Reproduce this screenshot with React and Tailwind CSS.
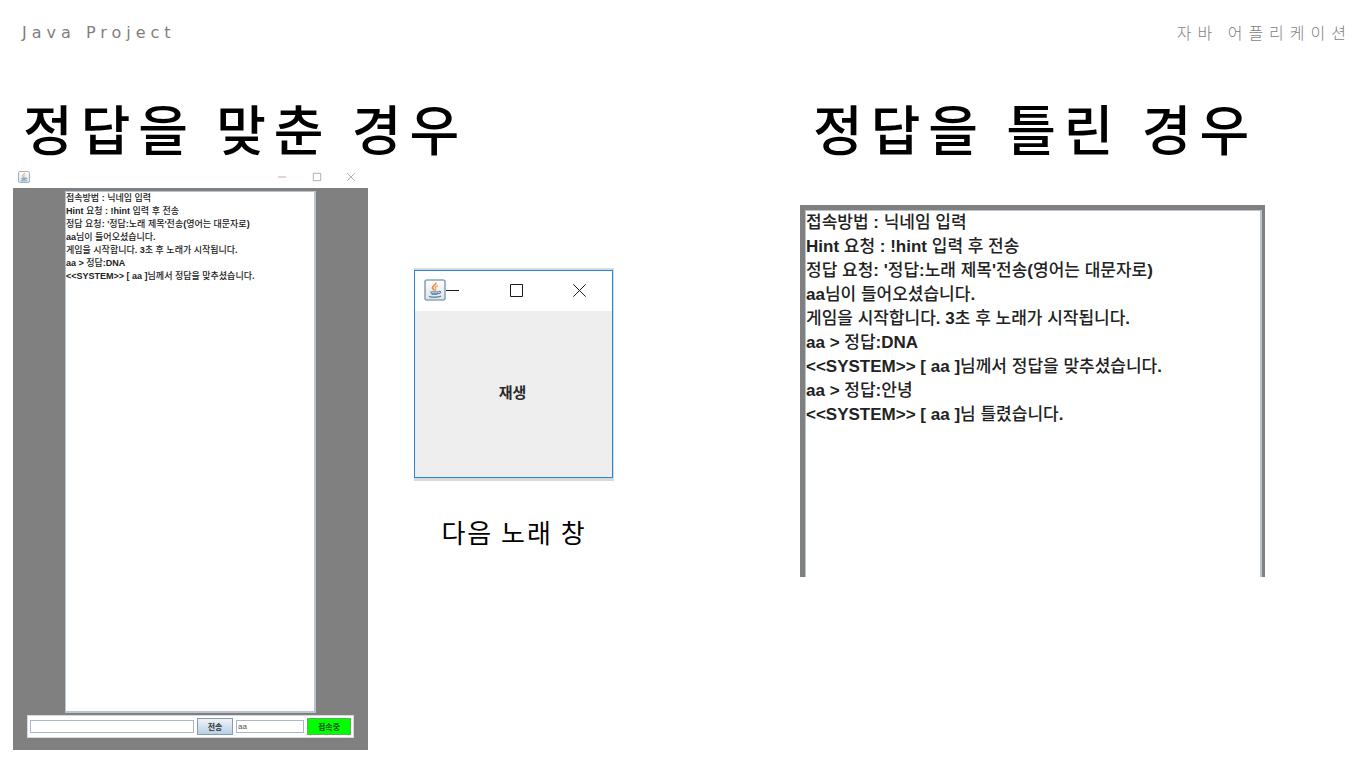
import React from "react";

const SANS = "font-['Liberation_Sans','Noto_Sans_CJK_KR',sans-serif]";
const KOREAN = "font-['Noto_Sans_CJK_KR',sans-serif]";

const GUIDE = [
  "접속방법 : 닉네임 입력",
  "Hint 요청 : !hint 입력 후 전송",
  "정답 요청: '정답:노래 제목'전송(영어는 대문자로)",
  "aa님이 들어오셨습니다.",
  "게임을 시작합니다. 3초 후 노래가 시작됩니다.",
  "aa > 정답:DNA",
  "<<SYSTEM>> [ aa ]님께서 정답을 맞추셨습니다.",
];
const WRONG = [...GUIDE, "aa > 정답:안녕", "<<SYSTEM>> [ aa ]님 틀렸습니다."];

// Latin runs are bold, Hangul keeps the medium weight.
function LogLine({ text }) {
  return (
    <p className="font-medium whitespace-nowrap">
      {text.split(/([!-~]+)/).map((part, i) =>
        i % 2 ? <b key={i}>{part}</b> : part
      )}
    </p>
  );
}

function JavaIcon({ className }) {
  return (
    <svg viewBox="0 0 22 22" className={className} aria-hidden="true">
      <defs>
        <linearGradient id="tile" x1="0" y1="0" x2="0" y2="1">
          <stop offset="0" stopColor="#ffffff" />
          <stop offset="1" stopColor="#dde3e8" />
        </linearGradient>
      </defs>
      <rect x="1" y="1" width="20" height="20" rx="2" fill="url(#tile)" stroke="#8ba6ba" strokeWidth="1.6" />
      <path d="M11.8 3.6c.8 2-3.6 3.200-3.300 5.200.2 1.200 1.700 1.800 1.700 3" fill="none" stroke="#ee8a3c" strokeWidth="1.700" />
      <path d="M13.800 6.600c-1.800.8-2.900 1.600-2.500 2.700.4 1 .9 1.500-.1 2.600" fill="none" stroke="#f0a25f" strokeWidth="1.300" />
      <path d="M6.200 12.200h8.600c-.3 2.300-1.200 3.600-2.200 3.900H8.400c-1-.3-1.900-1.600-2.200-3.900z" fill="#6f93b3" />
      <path d="M14.600 12.500c2.900-.8 3 1.900-.8 2.300" fill="none" stroke="#5f86a8" strokeWidth="1.100" />
      <path d="M7.500 13.500h6" stroke="#c4d4e1" strokeWidth=".7" />
      <path d="M5 17.300c2.500 1.300 9 1.300 12-.1" fill="none" stroke="#5f86a8" strokeWidth="1.300" />
    </svg>
  );
}

const SHAPES = {
  최소화: "M0 6.500h13",
  최대화: "M.5.5h12v12h-12z",
  닫기: "M.3.3l12.400 12.400M12.700.3L.3 12.700",
};

function WindowButtons({ size, stroke }) {
  return (
    <div className="flex flex-1 items-center justify-between">
      {Object.entries(SHAPES).map(([label, d]) => (
        <button key={label} type="button" aria-label={label} className={"block " + stroke}>
          <svg viewBox="0 0 13 13" className={"block overflow-visible " + size} fill="none" stroke="currentColor">
            <path d={d} vectorEffect="non-scaling-stroke" />
          </svg>
        </button>
      ))}
    </div>
  );
}

function Title({ children }) {
  return (
    <h2 className={"whitespace-nowrap text-[54px] leading-[72px] font-medium tracking-[8px] " + KOREAN}>
      {children}
    </h2>
  );
}

function ChatWindow() {
  return (
    <div className="flex w-[355px] flex-col">
      <div className="flex h-5 items-center pr-[13px] pb-[2px] pl-[5px]">
        <JavaIcon className="size-3" />
        <div className="flex flex-1 justify-end">
          <div className="flex w-[77px]">
            <WindowButtons size="size-2" stroke="text-[#b0b0b0]" />
          </div>
        </div>
      </div>
      <div className="flex flex-1 flex-col gap-[2px] bg-[#808080] px-[14px] pt-[3px] pb-3">
        <div className={"mx-[38px] flex-1 border border-r-2 border-b-2 border-[#b8c4d0] bg-white text-[9px] leading-[13px] text-[#222] " + SANS}>
          {GUIDE.map((t) => (
            <LogLine key={t} text={t} />
          ))}
        </div>
        <form className="flex h-[23px] items-center gap-[3px] border border-[#d8d8d8] bg-white px-[2px]">
          <input aria-label="메시지" className={"h-[13px] min-w-0 flex-1 border border-[#a9b7c6] px-px text-[8px] " + SANS} />
          <button type="button" className={"h-[17px] w-9 border border-[#8a9bb0] bg-linear-to-b from-[#eef3f8] to-[#b8cfe5] text-[8px] leading-none font-bold text-[#333] " + KOREAN}>
            전송
          </button>
          <input aria-label="닉네임" defaultValue="aa" className={"h-[13px] w-[68px] border border-[#a9b7c6] px-px text-[8px] text-[#555] " + SANS} />
          <button type="button" className={"h-[17px] w-11 border border-[#5fae5f] bg-[#00ff00] text-[8px] leading-none font-bold text-[#145014] " + KOREAN}>
            접속중
          </button>
        </form>
      </div>
    </div>
  );
}

function SongWindow() {
  return (
    <figure className="mt-[100px] flex w-[200px] flex-col">
      <div className="bg-[#d9d9d9] pt-[2px] pr-px pb-[3px]">
        <div className="border border-[#2488d8] bg-white">
          <div className="flex h-10 items-center pr-[26px] pb-[2px] pl-[9px]">
            <JavaIcon className="size-[22px]" />
            <WindowButtons size="size-[13px]" stroke="text-[#1a1a1a]" />
          </div>
          <button type="button" className={"block h-[166px] w-full bg-[#eeeeee] pr-[2px] pb-1 text-[15px] font-bold text-[#2a2a2a] " + KOREAN}>
            재생
          </button>
        </div>
      </div>
      <figcaption className={"mt-8 text-center text-[26px] leading-[38px] tracking-[2px] whitespace-nowrap " + KOREAN}>
        다음 노래 창
      </figcaption>
    </figure>
  );
}

export default function App() {
  return (
    <div className={"flex min-h-screen flex-col overflow-x-hidden bg-white text-black " + SANS}>
      <header className="flex h-[66px] items-center justify-between pr-4 pl-[22px] text-[16px] text-[#7f7f7f]">
        <span className="font-['DejaVu_Sans',sans-serif] tracking-[5px]">Java Project</span>
        <span className={"pb-[2px] font-light tracking-[6px] " + KOREAN}>자바 어플리케이션</span>
      </header>
      <main className="grid flex-1 grid-cols-[787fr_568fr] pt-[26px] pb-3 pl-[13px]">
        <section className="flex flex-col gap-1">
          <div className="pl-[10px]">
            <Title>정답을 맞춘 경우</Title>
          </div>
          <div className="flex flex-1 gap-[46px]">
            <ChatWindow />
            <SongWindow />
          </div>
        </section>
        <section>
          <div className="pl-[13px]">
            <Title>정답을 틀린 경우</Title>
          </div>
          <div className="mt-[41px] w-full max-w-[465px] bg-[#808080] pt-[5px] pr-[3px] pl-[5px]">
            <div className={"min-h-[367px] border-t border-r-2 border-l border-[#b8c4d0] bg-white text-[17px] leading-6 text-[#222] " + SANS}>
              {WRONG.map((t) => (
                <LogLine key={t} text={t} />
              ))}
            </div>
          </div>
        </section>
      </main>
    </div>
  );
}
